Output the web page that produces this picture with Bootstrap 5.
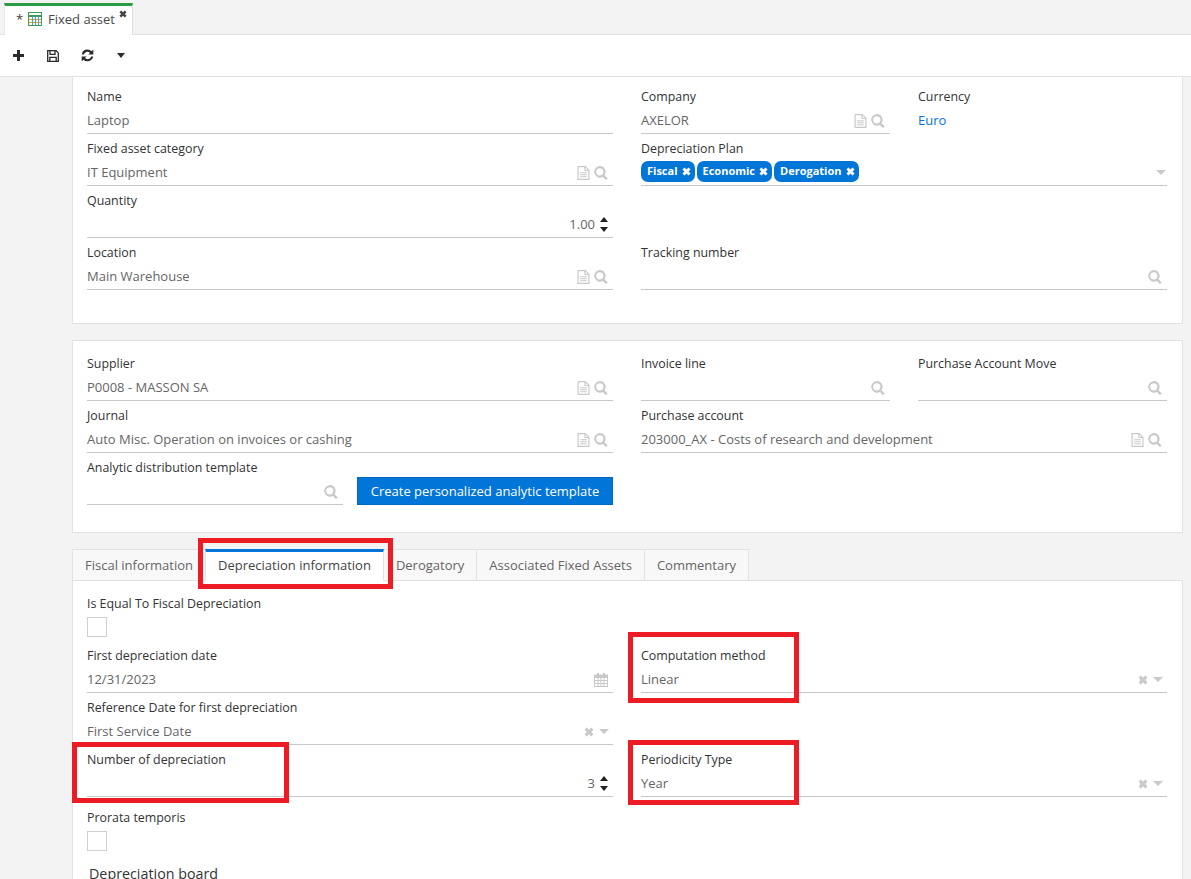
<!doctype html>
<html lang="en">
<head>
<meta charset="utf-8">
<title>Fixed asset</title>
<link href="https://cdn.jsdelivr.net/npm/bootstrap@5.3.0/dist/css/bootstrap.min.css" rel="stylesheet">
<style>
html,body{height:879px;overflow:hidden}
body{background:#f3f3f3;font-family:"Open Sans",sans-serif;font-size:13px;color:#333;position:relative}
.ax-strip{height:35px;background:#f3f3f3;border-bottom:1px solid #e2e2e2;padding:3px 0 0 4px}
.ax-tab{width:129px;height:32px;background:#fff;border-top:3px solid #2b9c46;border-right:1px solid #ddd;border-left:1px solid #e8e8e8;position:relative;padding:2px 0 0 11px;color:#555;line-height:22px}
.ax-star{width:12px;color:#444}
.ax-name{margin-left:6px;color:#4a4a4a}
.ax-close{position:absolute;right:5px;top:4px}
.ax-toolbar{height:42px;background:#fff;border-bottom:1px solid #e2e2e2;padding-left:13px}
.ax-tool{width:34px;height:28px;display:flex;align-items:center}
.ax-tool-last{padding-left:2px}
.ax-main{padding:0 8px 0 72px}
.ax-panel{background:#fff;border:1px solid #e2e2e2;padding:0 14px}
.ax-p1{border-top:0;height:247px;padding-top:11px;margin-bottom:16px}
.ax-p2{height:193px;padding-top:14px;margin-bottom:16px}
.ax-cols{display:grid;grid-template-columns:526px 526px;column-gap:28px}
.ax-half{display:grid;grid-template-columns:249px 249px;column-gap:28px}
.ax-half2{display:grid;grid-template-columns:256px 256px;column-gap:14px;align-items:start}
.ax-field{height:46px;margin-bottom:6px}
.ax-label{height:17px;line-height:17px;font-size:12.400px;font-weight:500;color:#333;white-space:nowrap}
.ax-val{height:29px;border-bottom:1px solid #c8c8c8;color:#666;padding:3px 5px 0 0}
.ax-sel{padding-right:4px}
.ax-plan{padding-right:1px}
.ax-plain{border-bottom:0}
.ax-plain a{color:#0275d8;text-decoration:none}
.ax-icons{gap:4px;flex:none}
.ax-sel .ax-icons{gap:5px}
.ax-muted{fill:#c9c9c9}
.ax-go{height:28px;background:#0275d8;border:1px solid #0068c4;border-radius:0;color:#fff;font-size:13px;padding:0;margin-top:18px;line-height:24px}
.ax-go:hover{background:#0275d8;color:#fff}
.ax-tags{gap:2px;margin-top:-3px}
.ax-tag{height:21px;background:#0275d8;color:#fff;font-size:11px;font-weight:700;border-radius:7px;padding:0 4px 0 6px;gap:4px;display:inline-flex;align-items:center;white-space:nowrap}
.ax-tabs.nav{height:32px;border:0;flex-wrap:nowrap;margin-bottom:-1px;position:relative}
.ax-tabs .nav-link{height:32px;margin:0;border:1px solid #e2e2e2;border-left:0;border-radius:0;background:#f8f8f8;color:#666;font-size:13px;line-height:30px;padding:0 12px}
.ax-tabs .nav-item:first-child .nav-link{border-left:1px solid #e2e2e2}
.ax-tabs .nav-link.active{background:#fff;color:#444;border-top:3px solid #0275d8;border-left:1px solid #e2e2e2;border-bottom-color:#fff;line-height:26px;margin-left:-1px}
.ax-body{background:#fff;border:1px solid #e2e2e2;padding:14px 14px 0;height:320px}
.ax-check{width:20px;height:20px;border:1px solid #d0d0d0;margin-top:5px}
.ax-gap{height:6px}
.ax-h{font-size:14.300px;font-weight:500;color:#333;margin:9px 0 0 2px;line-height:20px}
.ax-red{position:absolute;border:5px solid #ed1c24;pointer-events:none}
.ax-r1{left:198px;top:538px;width:195px;height:51px}
.ax-r2{left:628px;top:632px;width:171px;height:71px}
.ax-r3{left:72px;top:742px;width:217px;height:61px}
.ax-r4{left:628px;top:740px;width:171px;height:65px}
svg{display:block;flex:none}
.ax-sp{gap:5px}
.ax-spin{display:flex;flex-direction:column;gap:5px}
</style>
</head>
<body>
<svg width="0" height="0" class="position-absolute">
<defs>
<symbol id="i-doc" viewBox="0 0 13 14"><path d="M.5 0h8L12.500 4v10H.5zM1.700 1.200v11.600h9.600V5H7.400V1.200zM8.500 1.500V3.900h2.400zM3.200 6.200h6.600v1.100H3.200zM3.200 8.200h6.600v1.100H3.200zM3.200 10.200h6.600v1.100H3.200z" fill-rule="evenodd"/></symbol>
<symbol id="i-search" viewBox="0 0 14 14"><path d="M5.800 0a5.800 5.800 0 0 1 4.700 9.200l3.200 3.200-1.700 1.700-3.200-3.200A5.800 5.800 0 1 1 5.800 0zm0 2.200a3.600 3.600 0 1 0 0 7.200a3.600 3.600 0 0 0 0-7.200z" fill-rule="evenodd"/></symbol>
<symbol id="i-x" viewBox="0 0 10 10"><path d="M2.800.5 5 2.700 7.200.5 9.500 2.800 7.300 5 9.500 7.200 7.200 9.500 5 7.300 2.800 9.500.5 7.200 2.700 5 .5 2.800z"/></symbol>
<symbol id="i-caret" viewBox="0 0 10 5"><path d="M0 0h10L5 5z"/></symbol>
<symbol id="i-cal" viewBox="0 0 14 14"><path d="M3 0h2v1.500h4V0h2v1.500h3V14H0V1.500h3zM1 5v2h2.500V5zm3.500 0v2h2V5zm3 0v2h2V5zm3 0v2H13V5zM1 8v2h2.500V8zm3.500 0v2h2V8zm3 0v2h2V8zm3 0v2H13V8zM1 11v2h2.500v-2zm3.500 0v2h2v-2zm3 0v2h2v-2zm3 0v2H13v-2z" fill-rule="evenodd"/></symbol>
</defs>
</svg>

<div class="ax-strip d-flex">
  <div class="ax-tab d-flex align-items-start">
    <span class="ax-star">*</span>
    <svg width="14" height="14" viewBox="0 0 14 14" class="mt-1"><rect x=".5" y=".5" width="13" height="13" fill="#fff" stroke="#3b9c52"/><path d="M1 4h12" stroke="#3b9c52" stroke-width="2"/><path d="M1 7.500h12M1 10.500h12" stroke="#e0a030"/><path d="M4.500 4v9M7.500 4v9M10.500 4v9" stroke="#4aa0c8"/></svg>
    <span class="ax-name">Fixed asset</span>
    <svg class="ax-close" width="8" height="8" fill="#444"><use href="#i-x"/></svg>
  </div>
</div>

<div class="ax-toolbar d-flex align-items-center">
  <div class="ax-tool"><svg width="11" height="11" viewBox="0 0 11 11" fill="#2b2b2b"><path d="M4 0h3v4h4v3H7v4H4V7H0V4h4z"/></svg></div>
  <div class="ax-tool"><svg width="12" height="12" viewBox="0 0 12 12" fill="none" stroke="#2b2b2b" stroke-width="1.300"><path d="M.7.7h8.400l2.200 2.200v8.400H.7z"/><path d="M3 1v3.300h5V1M2.800 11V7.300h6.400V11"/></svg></div>
  <div class="ax-tool"><svg width="13" height="13" viewBox="0 0 13 13" fill="#2b2b2b"><path d="M6.500.6a5.900 5.900 0 0 1 4.100 1.700L12.300.6v5H7.300l1.700-1.700A3.600 3.600 0 0 0 2.900 5.600H.8A5.900 5.900 0 0 1 6.500.6zM.7 7.400h5L4 9.100a3.600 3.600 0 0 0 6.100-1.700h2.100a5.900 5.900 0 0 1-9.800 3.300L.7 12.400z"/></svg></div>
  <div class="ax-tool ax-tool-last"><svg width="8" height="5" viewBox="0 0 10 5" preserveAspectRatio="none" fill="#2b2b2b"><path d="M0 0h10L5 5z"/></svg></div>
</div>

<main class="ax-main">
  <section class="ax-panel ax-p1">
    <div class="ax-cols">
      <div class="ax-field"><div class="ax-label">Name</div><div class="ax-val d-flex align-items-center"><span>Laptop</span></div></div>
      <div class="ax-half">
        <div class="ax-field"><div class="ax-label">Company</div><div class="ax-val d-flex justify-content-between align-items-center"><span>AXELOR</span><span class="d-flex ax-icons ax-muted"><svg width="13" height="14"><use href="#i-doc"/></svg><svg width="14" height="14"><use href="#i-search"/></svg></span></div></div>
        <div class="ax-field"><div class="ax-label">Currency</div><div class="ax-val ax-plain d-flex align-items-center"><a href="#">Euro</a></div></div>
      </div>
      <div class="ax-field"><div class="ax-label">Fixed asset category</div><div class="ax-val d-flex justify-content-between align-items-center"><span>IT Equipment</span><span class="d-flex ax-icons ax-muted"><svg width="13" height="14"><use href="#i-doc"/></svg><svg width="14" height="14"><use href="#i-search"/></svg></span></div></div>
      <div class="ax-field"><div class="ax-label">Depreciation Plan</div><div class="ax-val ax-plan d-flex justify-content-between align-items-center"><span class="d-flex ax-tags">
        <span class="ax-tag">Fiscal<svg width="9" height="9" fill="#fff"><use href="#i-x"/></svg></span>
        <span class="ax-tag">Economic<svg width="9" height="9" fill="#fff"><use href="#i-x"/></svg></span>
        <span class="ax-tag">Derogation<svg width="9" height="9" fill="#fff"><use href="#i-x"/></svg></span>
      </span><svg width="10" height="5" class="ax-muted"><use href="#i-caret"/></svg></div></div>
      <div class="ax-field"><div class="ax-label">Quantity</div><div class="ax-val d-flex justify-content-end align-items-center ax-sp"><span>1.00</span><span class="ax-spin" aria-hidden="true"><svg width="8" height="5" viewBox="0 0 9 5" preserveAspectRatio="none" fill="#222"><path d="M0 5h9L4.500 0z"/></svg><svg width="8" height="5" viewBox="0 0 9 5" preserveAspectRatio="none" fill="#222"><path d="M0 0h9L4.500 5z"/></svg></span></div></div>
      <div></div>
      <div class="ax-field"><div class="ax-label">Location</div><div class="ax-val d-flex justify-content-between align-items-center"><span>Main Warehouse</span><span class="d-flex ax-icons ax-muted"><svg width="13" height="14"><use href="#i-doc"/></svg><svg width="14" height="14"><use href="#i-search"/></svg></span></div></div>
      <div class="ax-field"><div class="ax-label">Tracking number</div><div class="ax-val d-flex justify-content-end align-items-center"><svg width="14" height="14" class="ax-muted"><use href="#i-search"/></svg></div></div>
    </div>
  </section>

  <section class="ax-panel ax-p2">
    <div class="ax-cols">
      <div class="ax-field"><div class="ax-label">Supplier</div><div class="ax-val d-flex justify-content-between align-items-center"><span>P0008 - MASSON SA</span><span class="d-flex ax-icons ax-muted"><svg width="13" height="14"><use href="#i-doc"/></svg><svg width="14" height="14"><use href="#i-search"/></svg></span></div></div>
      <div class="ax-half">
        <div class="ax-field"><div class="ax-label">Invoice line</div><div class="ax-val d-flex justify-content-end align-items-center"><svg width="14" height="14" class="ax-muted"><use href="#i-search"/></svg></div></div>
        <div class="ax-field"><div class="ax-label">Purchase Account Move</div><div class="ax-val d-flex justify-content-end align-items-center"><svg width="14" height="14" class="ax-muted"><use href="#i-search"/></svg></div></div>
      </div>
      <div class="ax-field"><div class="ax-label">Journal</div><div class="ax-val d-flex justify-content-between align-items-center"><span>Auto Misc. Operation on invoices or cashing</span><span class="d-flex ax-icons ax-muted"><svg width="13" height="14"><use href="#i-doc"/></svg><svg width="14" height="14"><use href="#i-search"/></svg></span></div></div>
      <div class="ax-field"><div class="ax-label">Purchase account</div><div class="ax-val d-flex justify-content-between align-items-center"><span>203000_AX - Costs of research and development</span><span class="d-flex ax-icons ax-muted"><svg width="13" height="14"><use href="#i-doc"/></svg><svg width="14" height="14"><use href="#i-search"/></svg></span></div></div>
      <div class="ax-half2">
        <div class="ax-field"><div class="ax-label">Analytic distribution template</div><div class="ax-val d-flex justify-content-end align-items-center"><svg width="14" height="14" class="ax-muted"><use href="#i-search"/></svg></div></div>
        <button type="button" class="btn ax-go">Create personalized analytic template</button>
      </div>
    </div>
  </section>

  <ul class="nav nav-tabs ax-tabs">
    <li class="nav-item"><a class="nav-link" href="#">Fiscal information</a></li>
    <li class="nav-item"><a class="nav-link active" href="#">Depreciation information</a></li>
    <li class="nav-item"><a class="nav-link" href="#">Derogatory</a></li>
    <li class="nav-item"><a class="nav-link" href="#">Associated Fixed Assets</a></li>
    <li class="nav-item"><a class="nav-link" href="#">Commentary</a></li>
  </ul>
  <section class="ax-body">
    <div class="ax-cols">
      <div class="ax-field"><div class="ax-label">Is Equal To Fiscal Depreciation</div><div class="ax-check"></div></div>
      <div></div>
      <div class="ax-field"><div class="ax-label">First depreciation date</div><div class="ax-val d-flex justify-content-between align-items-center"><span>12/31/2023</span><svg width="14" height="14" class="ax-muted"><use href="#i-cal"/></svg></div></div>
      <div class="ax-field"><div class="ax-label">Computation method</div><div class="ax-val ax-sel d-flex justify-content-between align-items-center"><span>Linear</span><span class="d-flex ax-icons align-items-center ax-muted"><svg width="10" height="10"><use href="#i-x"/></svg><svg width="10" height="5"><use href="#i-caret"/></svg></span></div></div>
      <div class="ax-field"><div class="ax-label">Reference Date for first depreciation</div><div class="ax-val ax-sel d-flex justify-content-between align-items-center"><span>First Service Date</span><span class="d-flex ax-icons align-items-center ax-muted"><svg width="10" height="10"><use href="#i-x"/></svg><svg width="10" height="5"><use href="#i-caret"/></svg></span></div></div>
      <div></div>
      <div class="ax-field"><div class="ax-label">Number of depreciation</div><div class="ax-val d-flex justify-content-end align-items-center ax-sp"><span>3</span><span class="ax-spin" aria-hidden="true"><svg width="8" height="5" viewBox="0 0 9 5" preserveAspectRatio="none" fill="#222"><path d="M0 5h9L4.500 0z"/></svg><svg width="8" height="5" viewBox="0 0 9 5" preserveAspectRatio="none" fill="#222"><path d="M0 0h9L4.500 5z"/></svg></span></div></div>
      <div class="ax-field"><div class="ax-label">Periodicity Type</div><div class="ax-val ax-sel d-flex justify-content-between align-items-center"><span>Year</span><span class="d-flex ax-icons align-items-center ax-muted"><svg width="10" height="10"><use href="#i-x"/></svg><svg width="10" height="5"><use href="#i-caret"/></svg></span></div></div>
    </div>
    <div class="ax-gap"></div>
    <div class="ax-field"><div class="ax-label">Prorata temporis</div><div class="ax-check"></div></div>
    <h2 class="ax-h">Depreciation board</h2>
  </section>
</main>

<div class="ax-red ax-r1"></div>
<div class="ax-red ax-r2"></div>
<div class="ax-red ax-r3"></div>
<div class="ax-red ax-r4"></div>
<script src="https://cdn.jsdelivr.net/npm/bootstrap@5.3.0/dist/js/bootstrap.bundle.min.js"></script>
</body>
</html>
